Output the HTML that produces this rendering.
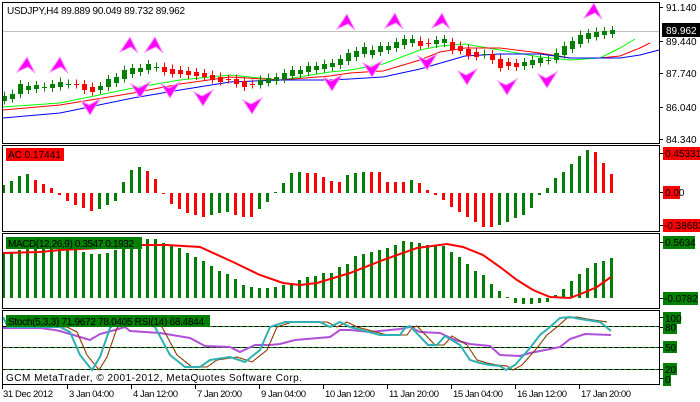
<!DOCTYPE html>
<html><head><meta charset="utf-8"><style>
html,body{margin:0;padding:0;background:#fff;width:700px;height:402px;overflow:hidden}
svg{display:block}
text{font-family:"Liberation Sans",sans-serif;font-size:10px;fill:#000}
.ax{font-size:9.5px}
</style></head><body>
<svg id="s" width="700" height="402" viewBox="0 0 700 402" xmlns="http://www.w3.org/2000/svg" shape-rendering="crispEdges">
<rect width="700" height="402" fill="#fff"/>
<line x1="2" y1="31.5" x2="660" y2="31.5" stroke="#c0c0c0"/>
<g id="lv"></g>
<g id="g"></g>
<g fill="none" stroke="#000">
<rect x="2.5" y="2.5" width="657" height="141"/>
<rect x="2.5" y="145.5" width="657" height="86"/>
<rect x="2.5" y="233.5" width="657" height="75"/>
<rect x="2.5" y="310.5" width="657" height="74"/>
</g>
<g id="ticks" stroke="#000"></g>
<text x="7" y="14" textLength="178">USDJPY,H4  89.889 90.049 89.732 89.962</text>
<rect x="6" y="148" width="58" height="13" fill="#ff0000"/>
<text x="8" y="158">AC 0.17441</text>
<rect x="6" y="237" width="136" height="12" fill="#008000"/>
<text x="8" y="247" textLength="126">MACD(12,26,9) 0.3547 0.1932</text>
<rect x="6" y="315" width="204" height="12" fill="#008000"/>
<text x="8" y="325" textLength="196">Stoch(5,3,3) 71.9672 78.0405  RSI(14) 68.4844</text>
<text x="6" y="381" textLength="296">GCM MetaTrader, © 2001-2012, MetaQuotes Software Corp.</text>
<text x="666" y="11">91.140</text>
<rect x="662" y="23" width="38" height="14" fill="#000"/>
<text x="666" y="34" style="fill:#fff">89.962</text>
<text x="666" y="45">89.440</text>
<text x="666" y="77">87.740</text>
<text x="666" y="111">86.040</text>
<text x="666" y="143">84.340</text>
<rect x="663" y="147" width="37" height="13" fill="#ff0000"/>
<text x="665" y="157">0.45331</text>
<rect x="663" y="186" width="17" height="13" fill="#ff0000"/>
<text x="665" y="196">0.00</text>
<rect x="663" y="219" width="37" height="13" fill="#ff0000"/>
<text x="664" y="229">-0.38683</text>
<rect x="663" y="236" width="32" height="13" fill="#008000"/>
<text x="665" y="246">0.5634</text>
<rect x="663" y="292" width="35" height="13" fill="#008000"/>
<text x="664" y="302">-0.0782</text>
<rect x="663" y="312" width="18" height="12" fill="#008000"/>
<text x="665" y="322">100</text>
<rect x="663" y="322" width="14" height="12" fill="#008000"/>
<text x="665" y="331">80</text>
<rect x="663" y="341" width="14" height="12" fill="#008000"/>
<text x="665" y="351">50</text>
<rect x="663" y="363" width="14" height="12" fill="#008000"/>
<text x="665" y="373">20</text>
<rect x="663" y="374" width="8" height="12" fill="#008000"/>
<text x="665" y="383">0</text>
<text class="ax" x="3" y="397" textLength="50">31 Dec 2012</text>
<text class="ax" x="69" y="397" textLength="45">3 Jan 04:00</text>
<text class="ax" x="133" y="397" textLength="45">4 Jan 12:00</text>
<text class="ax" x="197" y="397" textLength="45">7 Jan 20:00</text>
<text class="ax" x="261" y="397" textLength="45">9 Jan 04:00</text>
<text class="ax" x="325" y="397" textLength="50">10 Jan 12:00</text>
<text class="ax" x="389" y="397" textLength="50">11 Jan 20:00</text>
<text class="ax" x="453" y="397" textLength="50">15 Jan 04:00</text>
<text class="ax" x="517" y="397" textLength="50">16 Jan 12:00</text>
<text class="ax" x="581" y="397" textLength="50">17 Jan 20:00</text>
</svg>
<script>
var NS="http://www.w3.org/2000/svg",G=document.getElementById('g');
function el(t,a,p){var e=document.createElementNS(NS,t);for(var k in a)e.setAttribute(k,a[k]);(p||G).appendChild(e);return e;}
var GR="#008000",RD="#ff0000";
[326.5,347.5,369.5].forEach(function(y){el('line',{x1:3,y1:y,x2:659,y2:y,stroke:"#000","stroke-dasharray":"3,3"},document.getElementById('lv'));el('line',{x1:6,y1:y,x2:659,y2:y,stroke:"#008000","stroke-dasharray":"3,3"},document.getElementById('lv'));});
var T=document.getElementById('ticks');
[2,67,131,195,259,323,387,451,515,579].forEach(function(x){el('line',{x1:x+.5,y1:385,x2:x+.5,y2:389},T)});
[7,41,73,107,139,153,192,225,242,298,317,327,347,369,378].forEach(function(y){el('line',{x1:660,y1:y+.5,x2:663,y2:y+.5},T)});
function pl(pts,c,w){el('polyline',{points:pts.map(function(p){return p.join(',')}).join(' '),fill:'none',stroke:c,'stroke-width':w,'shape-rendering':'auto'});}
pl([[3,107],[60,103],[133,88],[180,80],[230,75],[280,80],[330,72],[350,70],[383,64],[420,50],[440,46],[465,44],[500,50],[540,57],[570,60],[600,58],[620,48],[635,39]],"#00ff00",1);
pl([[3,110],[60,105],[133,93],[180,84],[230,77],[280,80],[330,76],[350,73],[383,71],[420,60],[440,52],[465,48],[500,48],[540,53],[570,58],[600,58],[620,56],[640,48],[650,43]],RD,1);
pl([[3,118],[60,113],[133,98],[180,90],[230,82],[280,80],[330,80],[350,79],[383,77],[420,69],[465,56],[500,54],[540,54],[570,58],[600,58],[620,58],[640,55],[659,50]],"#0000ff",1);
var C=[98,96,89,88,87,87,86,84,84,84,87,89,88,83,80,74,71,70,67,67,69,71,72,73,74,75,77,79,79,81,84,84,82,80,79,76,73,72,69,68,66,65,62,57,54,50,52,49,48,45,42,41,43,43,42,41,46,48,52,54,54,57,63,64,65,64,62,60,60,56,50,45,39,36,34,33,32];
var redSet={9:1,10:1,11:1,20:1,21:1,22:1,23:1,24:1,25:1,26:1,27:1,28:1,29:1,30:1,31:1,52:1,53:1,56:1,57:1,58:1,59:1,61:1,62:1,63:1,64:1};
for(var i=0;i<77;i++){var x=4+8*i,c=C[i],p=i?C[i-1]:c+2;var red=redSet[i];var d=Math.max(2,Math.abs(c-p)/2+1.5);if(Math.abs(c-p)<1)d=0.5;
 var col=red?RD:GR;el('line',{x1:x+.5,y1:c-d-4,x2:x+.5,y2:c+d+4,stroke:col});
 if(d<1)el('rect',{x:x-2,y:c,width:5,height:1,fill:col});else el('rect',{x:x-2,y:Math.round(c-d),width:5,height:Math.max(3,Math.round(2*d)),fill:col});}
function up(x,y){el('polygon',{points:[[x,y],[x-10,y+15],[x+1,y+10],[x+8,y+16]].join(' '),fill:'#ff00ff',stroke:'#ff99ff','stroke-width':1,'shape-rendering':'auto'});}
function dn(x,y){el('polygon',{points:[[x,y],[x-9,y-14],[x-1,y-10],[x+10,y-16]].join(' '),fill:'#ff00ff',stroke:'#ff99ff','stroke-width':1,'shape-rendering':'auto'});}
[[27,57],[60,57],[130,37],[155,37],[347,14],[395,13],[442,13],[594,3]].forEach(function(a){up(a[0],a[1])});
[[90,115],[140,98],[170,98],[203,106],[252,114],[332,91],[372,77],[427,70],[467,85],[507,95],[547,88]].forEach(function(a){dn(a[0],a[1])});
var A=[8,12,17,19,13,9,5,-2,-8,-12,-15,-18,-16,-12,-8,11,23,26,22,14,-1,-11,-16,-20,-22,-24,-22,-20,-19,-22,-24,-24,-16,-9,1,10,20,21,20,20,16,12,11,18,20,21,21,21,11,11,11,13,10,3,-2,-7,-14,-19,-24,-29,-34,-34,-32,-29,-25,-22,-15,-2,5,15,21,29,37,43,41,30,19];
for(i=0;i<77;i++){var v=A[i],col=(i==0||v>A[i-1])?GR:RD;var x=2+8*i;var y0=193;if(v>=0)el('rect',{x:x,y:y0-v,width:3,height:Math.max(1,v),fill:col});else el('rect',{x:x,y:y0,width:3,height:-v,fill:col});}
var M=[252,252,250,249,249,249,249,249,249,249,252,254,254,253,250,249,247,243,239,239,243,246,248,253,257,261,266,271,274,279,285,287,288,288,287,285,283,280,277,276,273,273,267,264,256,254,252,250,248,245,241,242,243,245,246,246,252,257,264,271,275,284,291,297,303,304,304,303,302,295,289,281,274,268,263,261,258];
for(i=0;i<77;i++){var t=M[i],x=2+8*i;if(t<=297)el('rect',{x:x,y:t,width:3,height:298-t,fill:GR});else el('rect',{x:x,y:298,width:3,height:t-298,fill:GR});}
pl([[3,253],[40,252],[60,250],[100,248],[140,245],[167,245],[200,247],[233,262],[260,275],[283,283],[300,285],[317,283],[350,273],[383,260],[417,248],[447,244],[463,247],[483,255],[500,267],[517,280],[533,290],[550,297],[570,298],[583,293],[597,287],[611,277]],RD,2);
var K=[[3,317],[8,327],[60,327],[70,332],[80,355],[92,370],[100,357],[110,328],[120,320],[140,320],[155,327],[170,355],[185,367],[200,367],[210,360],[230,357],[245,362],[260,350],[270,327],[285,322],[320,322],[330,327],[340,322],[350,327],[380,335],[400,335],[405,328],[410,326],[428,345],[437,345],[445,336],[460,345],[470,360],[480,363],[490,365],[500,366],[506,370],[515,365],[530,348],[540,335],[550,327],[560,318],[570,317],[580,319],[600,322],[611,331]];
var R=[[3,328],[40,328],[55,330],[60,331],[70,334],[90,340],[100,334],[115,330],[125,327],[130,331],[145,332],[160,333],[190,338],[205,346],[230,347],[240,352],[255,345],[270,345],[280,344],[295,340],[330,337],[340,330],[350,330],[370,332],[400,329],[410,327],[420,332],[440,333],[455,340],[470,344],[490,346],[500,355],[520,356],[530,353],[550,349],[560,347],[570,339],[585,334],[611,335]];
var S=K.map(function(p){return [p[0]+7,p[1]]}).filter(function(p){return p[0]<=611});
pl(R,"#b050d8",2);
pl(S,RD,1);
el('polyline',{points:S.map(function(p){return p.join(',')}).join(' '),fill:'none',stroke:GR,'stroke-width':1,'stroke-dasharray':'2,2','shape-rendering':'auto'});
pl(K,"#30b0b0",2);
</script>
</body></html>
